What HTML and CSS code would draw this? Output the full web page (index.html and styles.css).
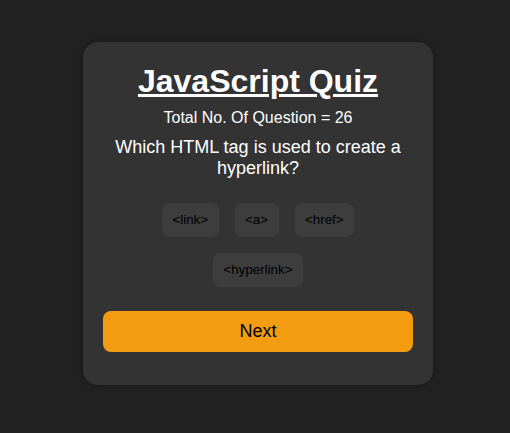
FILE: index.html
```html
<!DOCTYPE html>
<html>
<head>
<meta charset="utf-8">
<link rel="stylesheet" href="styles.css">
</head>
<body>
<div class="page">
  <div class="card">
    <h1 class="title">JavaScript Quiz</h1>
    <p class="total">Total No. Of Question = 26</p>
    <p class="question">Which HTML tag is used to create a hyperlink?</p>
    <div class="options">
      <button class="opt">&lt;link&gt;</button>
      <button class="opt">&lt;a&gt;</button>
      <button class="opt">&lt;href&gt;</button>
      <button class="opt">&lt;hyperlink&gt;</button>
    </div>
    <button class="next">Next</button>
  </div>
</div>
</body>
</html>
```

FILE: styles.css
```css
html, body {
  margin: 0;
  padding: 0;
  background: #222222;
  font-family: "Liberation Sans", Arial, sans-serif;
  height: 100%;
}
.page {
  padding: 42px 0 0 6px;
  display: flex;
  justify-content: center;
  align-items: flex-start;
  box-sizing: border-box;
  height: 433px;
}
.card {
  width: 350px;
  box-sizing: border-box;
  background: #333333;
  border-radius: 15px;
  box-shadow: 0 0 10px rgba(0, 0, 0, 0.35);
  padding: 21px 20px 20px;
  color: #ffffff;
  text-align: center;
  display: flex;
  flex-direction: column;
}
.title {
  margin: 0;
  font-size: 32px;
  font-weight: bold;
  text-decoration: underline;
  line-height: 37px;
}
.total {
  margin: 8px 0 0;
  font-size: 16px;
  line-height: 19px;
}
.question {
  margin: 10px 0 0;
  font-size: 18px;
  line-height: 21px;
}
.options {
  margin-top: 16px;
  display: flex;
  flex-wrap: wrap;
  justify-content: center;
}
.opt {
  margin: 8px;
  padding: 10px 10.5px;
  font-family: "Liberation Sans", Arial, sans-serif;
  font-size: 13.333px;
  line-height: 14px;
  color: #000000;
  background: #3d3d3d;
  border: none;
  border-radius: 7px;
}
.next {
  margin: 16px 0 13px;
  padding: 10px;
  font-family: "Liberation Sans", Arial, sans-serif;
  font-size: 18px;
  line-height: 21px;
  color: #000000;
  background: #f39c12;
  border: none;
  border-radius: 8px;
}
```
